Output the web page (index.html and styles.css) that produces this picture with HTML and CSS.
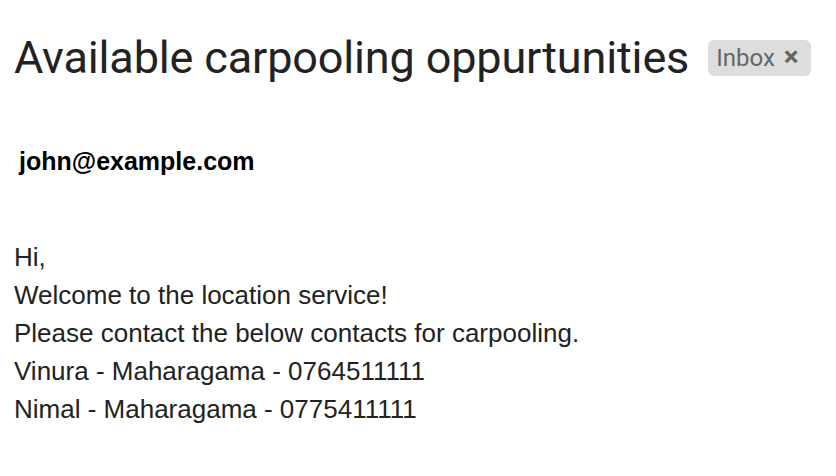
FILE: index.html
```html
<!DOCTYPE html>
<html>
<head>
<meta charset="utf-8">
<link rel="stylesheet" href="styles.css">
</head>
<body>
<div class="page">
  <div class="subject-row">
    <h1 class="subject">Available carpooling oppurtunities</h1>
    <span class="label">Inbox <span class="label-x">×</span></span>
  </div>
  <div class="sender">john@example.com</div>
  <div class="body">
    <div class="line">Hi,</div>
    <div class="line">Welcome to the location service!</div>
    <div class="line">Please contact the below contacts for carpooling.</div>
    <div class="line">Vinura - Maharagama - 0764511111</div>
    <div class="line">Nimal - Maharagama - 0775411111</div>
  </div>
</div>
</body>
</html>
```
FILE: styles.css
```css
html, body { margin: 0; padding: 0; background: #fff; }
.page { padding: 0 0 0 14px; }
.subject-row { display: flex; align-items: center; padding-top: 34px; height: 48px; }
.subject { margin: 0; font-family: Roboto, "Open Sans", sans-serif; font-weight: 400; font-size: 45px; color: #222; letter-spacing: -0.15px; line-height: 48px; }
.label { margin-left: 19px; background: #ddd; color: #666; border-radius: 6px; font-family: Roboto, sans-serif; font-size: 24px; padding: 3px 12px 4px 8px; line-height: 28px; }
.label-x { font-size: 28px; font-weight: 700; margin-left: 3px; }
.sender { margin-top: 65px; padding-left: 5px; font-family: "Liberation Sans", Arial, sans-serif; font-weight: 700; font-size: 25px; color: #000; line-height: 28px; }
.body { margin-top: 63px; font-family: "Liberation Sans", Arial, sans-serif; font-size: 26px; color: #222; }
.line { line-height: 38px; }
```
